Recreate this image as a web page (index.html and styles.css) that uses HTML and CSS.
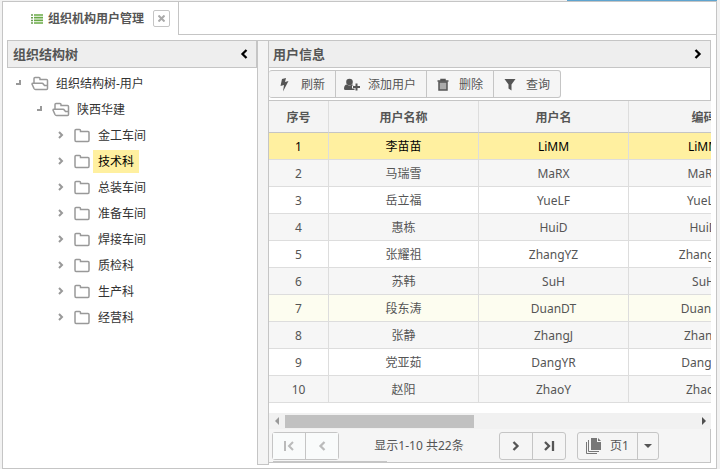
FILE: index.html
```html
<!DOCTYPE html>
<html lang="zh-CN">
<head>
<meta charset="utf-8">
<title>组织机构用户管理</title>
<link rel="stylesheet" href="styles.css">
</head>
<body>
<svg class="defs" aria-hidden="true">
  <symbol id="folder" viewBox="0 0 16 15"><path d="M1 12V2.500Q1 1.500 2 1.500H5.500Q6.500 1.500 6.500 2.500V3.500H14Q15 3.500 15 4.500V12Q15 13.500 14 13.500H2Q1 13.500 1 12Z" fill="none" stroke="#999" stroke-width="1.500"/></symbol>
  <symbol id="folder-open" viewBox="0 0 18 15"><path d="M3 7V2.500Q3 1.500 4 1.500H8Q9 1.500 9 2.500V3.500H15.500Q16.500 3.500 16.500 4.500V12.500Q16.500 13.500 15.500 13.500H4.500Q3.500 13.500 3 12.500L1 8Q1 7.300 2 7.300H11Q12 7.300 12.500 8.300L13.500 9.500H16.500" fill="none" stroke="#999" stroke-width="1.500"/></symbol>
  <symbol id="closed" viewBox="0 0 6 8"><path d="M1 1L4 4L1 7" fill="none" stroke="#999" stroke-width="2"/></symbol>
  <symbol id="opened" viewBox="0 0 6 6"><path d="M4 0V4H0" fill="none" stroke="#999" stroke-width="2"/></symbol>
  <symbol id="left" viewBox="0 0 8 10"><path d="M6.500 1L2.500 5L6.500 9" fill="none" stroke="currentColor" stroke-width="2.300"/></symbol>
  <symbol id="right" viewBox="0 0 8 10"><path d="M1.500 1L5.500 5L1.500 9" fill="none" stroke="currentColor" stroke-width="2.300"/></symbol>
</svg>
<div class="frame">
  <div class="load"></div>
  <div class="tabs">
    <div class="tab">
      <svg width="12" height="10" viewBox="0 0 12 10"><path d="M0 1H2M0 3.700H2M0 6.400H2M0 9H2" stroke="#6a9c52" stroke-width="1.500"/><path d="M3 1H12M3 3.700H12M3 6.400H12M3 9H12" stroke="#69aa46" stroke-width="1.700"/></svg>
      <span class="tab-title">组织机构用户管理</span>
      <button class="close" aria-label="关闭"><svg width="7" height="7" viewBox="0 0 7 7"><path d="M.5.500L6.500 6.500M6.500.500L.5 6.500" stroke="#aaa" stroke-width="2"/></svg></button>
    </div>
    <div class="tabs-rest"></div>
  </div>
  <main class="content">
    <section class="side">
      <header class="head side-head"><h2>组织结构树</h2><button class="fold" aria-label="收起"><svg width="8" height="10"><use href="#left"/></svg></button></header>
      <ul class="tree">
        <li><div class="node"><svg class="arrow" width="6" height="6"><use href="#opened"/></svg><svg class="icon" width="18" height="15"><use href="#folder-open"/></svg><span class="label">组织结构树-用户</span></div>
          <ul>
            <li><div class="node"><svg class="arrow" width="6" height="6"><use href="#opened"/></svg><svg class="icon" width="18" height="15"><use href="#folder-open"/></svg><span class="label">陕西华建</span></div>
              <ul>
                <li class="node"><svg class="arrow" width="6" height="8"><use href="#closed"/></svg><svg class="icon" width="16" height="15"><use href="#folder"/></svg><span class="label">金工车间</span></li>
                <li class="node"><svg class="arrow" width="6" height="8"><use href="#closed"/></svg><svg class="icon" width="16" height="15"><use href="#folder"/></svg><span class="label selected">技术科</span></li>
                <li class="node"><svg class="arrow" width="6" height="8"><use href="#closed"/></svg><svg class="icon" width="16" height="15"><use href="#folder"/></svg><span class="label">总装车间</span></li>
                <li class="node"><svg class="arrow" width="6" height="8"><use href="#closed"/></svg><svg class="icon" width="16" height="15"><use href="#folder"/></svg><span class="label">准备车间</span></li>
                <li class="node"><svg class="arrow" width="6" height="8"><use href="#closed"/></svg><svg class="icon" width="16" height="15"><use href="#folder"/></svg><span class="label">焊接车间</span></li>
                <li class="node"><svg class="arrow" width="6" height="8"><use href="#closed"/></svg><svg class="icon" width="16" height="15"><use href="#folder"/></svg><span class="label">质检科</span></li>
                <li class="node"><svg class="arrow" width="6" height="8"><use href="#closed"/></svg><svg class="icon" width="16" height="15"><use href="#folder"/></svg><span class="label">生产科</span></li>
                <li class="node"><svg class="arrow" width="6" height="8"><use href="#closed"/></svg><svg class="icon" width="16" height="15"><use href="#folder"/></svg><span class="label">经营科</span></li>
              </ul>
            </li>
          </ul>
        </li>
      </ul>
    </section>
    <div class="splitter"></div>
    <section class="users">
      <header class="head users-head"><h2>用户信息</h2><button class="fold" aria-label="展开"><svg width="8" height="10"><use href="#right"/></svg></button></header>
      <div class="toolbar">
        <div class="group">
          <button class="tool"><svg width="16" height="14" viewBox="0 0 16 14"><path d="M5 1L9 0L8 4L11.500 3L6 13.500L7 7L3.500 8Z" fill="#555"/></svg>刷新</button>
          <button class="tool"><svg width="16" height="14" viewBox="0 0 16 14"><circle cx="5.500" cy="4" r="3.300" fill="#555"/><path d="M0 11Q0 6.500 3 6.500Q5.500 8.500 8 6.500Q9 6.500 9.500 7.500H8V10.500H10.500V12H1.500Q0 12 0 11Z" fill="#555"/><path d="M12.500 5.500V12.500M9 9H16" stroke="#555" stroke-width="2"/></svg>添加用户</button>
          <button class="tool"><svg width="16" height="14" viewBox="0 0 16 14"><path d="M4 4H12V12H4Z" fill="#aaa" stroke="#555" stroke-width="1.500"/><path d="M2.500 3H13.500M6 2.500V1.500H10V2.500" fill="none" stroke="#555" stroke-width="1.500"/></svg>删除</button>
          <button class="tool"><svg width="16" height="14" viewBox="0 0 16 14"><path d="M2.500 1H13.500L9.500 6.500V12.500L6.500 10.500V6.500Z" fill="#555"/></svg>查询</button>
        </div>
      </div>
      <div class="grid-view">
        <table>
          <colgroup><col class="c-no"><col class="c-text"><col class="c-text"><col class="c-text"></colgroup>
          <thead><tr><th>序号</th><th>用户名称</th><th>用户名</th><th>编码</th></tr></thead>
          <tbody>
            <tr class="active"><td>1</td><td>李苗苗</td><td>LiMM</td><td>LiMM</td></tr>
            <tr><td>2</td><td>马瑞雪</td><td>MaRX</td><td>MaRX</td></tr>
            <tr><td>3</td><td>岳立福</td><td>YueLF</td><td>YueLF</td></tr>
            <tr><td>4</td><td>惠栋</td><td>HuiD</td><td>HuiD</td></tr>
            <tr><td>5</td><td>张耀祖</td><td>ZhangYZ</td><td>ZhangYZ</td></tr>
            <tr><td>6</td><td>苏韩</td><td>SuH</td><td>SuH</td></tr>
            <tr class="hover"><td>7</td><td>段东涛</td><td>DuanDT</td><td>DuanDT</td></tr>
            <tr><td>8</td><td>张静</td><td>ZhangJ</td><td>ZhangJ</td></tr>
            <tr><td>9</td><td>党亚茹</td><td>DangYR</td><td>DangYR</td></tr>
            <tr><td>10</td><td>赵阳</td><td>ZhaoY</td><td>ZhaoY</td></tr>
          </tbody>
        </table>
      </div>
      <div class="scroll">
        <svg width="16" height="16"><path d="M10 4V12L6 8Z" fill="#999"/></svg>
        <div class="track"><div class="thumb"></div></div>
        <svg width="16" height="16"><path d="M7 4V12L11 8Z" fill="#505050"/></svg>
      </div>
      <footer class="pager">
        <div class="group">
          <button class="step" disabled aria-label="首页"><svg width="12" height="10" viewBox="0 0 12 10"><path d="M2 0V10M10 1L6 5L10 9" fill="none" stroke="currentColor" stroke-width="2"/></svg></button>
          <button class="step" disabled aria-label="上一页"><svg width="8" height="10"><use href="#left"/></svg></button>
        </div>
        <span class="summary">显示1-10 共22条</span>
        <div class="group">
          <button class="step" aria-label="下一页"><svg width="8" height="10"><use href="#right"/></svg></button>
          <button class="step" aria-label="末页"><svg width="12" height="10" viewBox="0 0 12 10"><path d="M10 0V10M2 1L6 5L2 9" fill="none" stroke="currentColor" stroke-width="2.300"/></svg></button>
        </div>
        <div class="group">
          <button class="page"><svg width="15" height="16" viewBox="0 0 15 16"><path d="M5 0H11V4H15V12H5Z" fill="#777"/><path d="M12 0L15 3H12Z" fill="#777"/><path d="M2.500 2V13.500H13M.5 4V15.500H11" fill="none" stroke="#777"/></svg>页1</button>
          <button class="caret" aria-label="选择页"><svg width="8" height="4"><path d="M0 0H8L4 4Z" fill="#555"/></svg></button>
        </div>
      </footer>
      <div class="progress"></div>
    </section>
  </main>
</div>
</body>
</html>
```
FILE: styles.css
```css
* { box-sizing: border-box; }
html, body { height: 100%; }
body {
  margin: 0;
  background: #f2f2f2;
  color: #555;
  font: 12px/18px "Noto Sans", "Noto Sans CJK SC", sans-serif;
}
ul { list-style: none; margin: 0; padding: 0; }
h2 { margin: 0; font-size: 13px; line-height: 20px; font-weight: 700; }
svg { display: block; flex: none; }
button { margin: 0; padding: 0; border: 0; background: none; color: inherit; font: inherit; display: flex; align-items: center; justify-content: center; }
.defs { position: absolute; width: 0; height: 0; }

.frame { position: relative; min-height: 100%; padding: 1px 3px 0 2px; display: flex; flex-direction: column; }
.load { position: absolute; top: 0; right: 3px; width: 150px; height: 1px; background: #5ea4cf; }
.tabs { display: flex; height: 34px; border: solid #c5c5c5; border-width: 1px 1px 0; background: #fff; }
.tab { display: flex; align-items: center; width: 176px; padding-left: 28px; border-right: 1px solid #c5c5c5; }
.tab-title { margin-left: 5px; font-weight: 700; }
.close { width: 17px; height: 17px; margin-left: 9px; border: 1px solid #c5c5c5; border-radius: 2px; }
.tabs-rest { flex: 1; border-bottom: 1px solid #c5c5c5; }

.content { flex: 1; display: flex; padding: 5px 5px 3px 4px; border: solid #c5c5c5; border-width: 0 1px 1px; background: #fff; }
.side { width: 250px; flex: none; }
.head { display: flex; align-items: center; justify-content: space-between; height: 28px; padding: 0 8px 0 5px; border: 1px solid #c5c5c5; background: #eee; }
.fold { color: #000; }
.users-head { padding-left: 4px; border-left: 0; }
.splitter { flex: none; width: 12px; border: 1px solid #c5c5c5; background: #f4f4f4; }
.users { position: relative; flex: 1; min-width: 0; display: flex; flex-direction: column; margin-bottom: 2px; }

.tree { padding: 2px 0 0 8px; color: #333; }
.tree ul { padding-left: 21px; }
.node { display: flex; align-items: center; height: 26px; }
.arrow { margin: 0 9px 0 1px; }
.icon { width: 18px; }
.label { margin-left: 2px; padding: 3px 5px 2px; }
.selected { background: #fff0a0; color: #000; }

.toolbar { padding: 2px 0; border: solid #c5c5c5; border-width: 0 1px 1px 0; }
.group { display: flex; flex: none; height: 28px; border: 1px solid #c5c5c5; border-radius: 3px; background: #f5f5f5; }
.toolbar .group { width: max-content; border-left: 0; }
.group button + button { border-left: 1px solid #c5c5c5; }
.tool { gap: 8px; padding: 1px 10px 0 8px; }

.grid-view { flex: 1; overflow: hidden; padding-bottom: 10px; }
table { width: 510px; min-width: 100%; table-layout: fixed; border-collapse: separate; border-spacing: 0; }
.c-no { width: 60px; }
.c-text { width: 150px; }
th, td { padding: 2px 0 0; text-align: center; border: solid #ddd; border-width: 0 1px 1px 0; }
th { height: 32px; background: #f4f4f4; border-bottom-color: #c5c5c5; font-weight: 700; }
td { height: 27px; }
tbody tr:nth-child(even) { background: #f6f6f6; }
tbody .active { background: #fff0a0; color: #000; }
tbody .hover { background: #fdfdf0; }

.scroll { display: flex; height: 16px; background: #f1f1f1; }
.track { flex: 1; padding: 2px 0; }
.thumb { width: 46%; height: 13px; background: #c1c1c1; }
.pager { display: flex; align-items: center; height: 34px; padding-left: 3px; border: solid #c5c5c5; border-width: 0 1px 1px 0; background: #f5f5f5; }
.group .step { width: 32px; }
.group .step + .step { width: 33px; }
.step:disabled { color: #bbb; background: #f9fbfb; }
.summary { width: 160px; text-align: center; }
.pager .group + .group { margin-left: 11px; }
.page { width: 59px; gap: 9px; }
.caret { width: 21px; }
.progress { position: absolute; bottom: 1px; left: 4px; width: 114px; height: 1px; background: #c5c5c5; }
```
